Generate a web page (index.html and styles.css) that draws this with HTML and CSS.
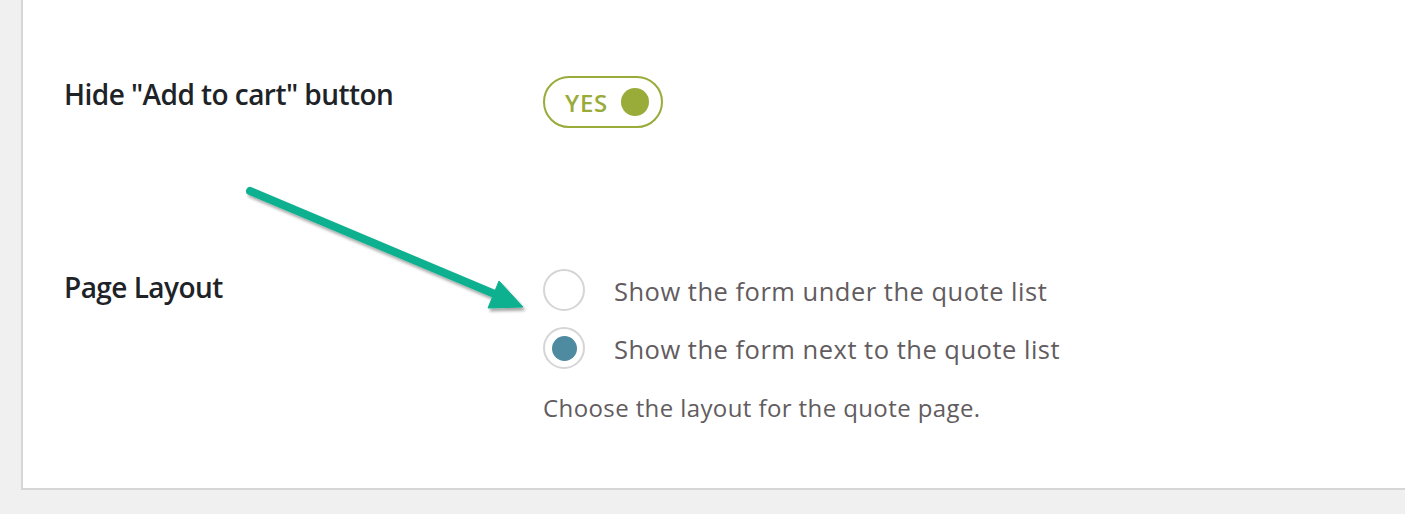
FILE: index.html
```html
<!DOCTYPE html>
<html lang="en">
<head>
<meta charset="utf-8">
<title>Quote settings</title>
<link rel="stylesheet" href="styles.css">
</head>
<body>
<div class="panel">
  <div class="settings">
    <div class="setting">
      <div class="setting-label">Hide "Add to cart" button</div>
      <div class="setting-control">
        <span class="toggle"><span class="toggle-text">YES</span><span class="toggle-dot"></span></span>
      </div>
    </div>
    <div class="setting">
      <div class="setting-label">Page Layout</div>
      <div class="setting-control">
        <ul class="radio-list">
          <li class="radio-item"><span class="radio"></span><span class="radio-text">Show the form under the quote list</span></li>
          <li class="radio-item"><span class="radio radio-checked"></span><span class="radio-text">Show the form next to the quote list</span></li>
        </ul>
        <p class="description">Choose the layout for the quote page.</p>
      </div>
    </div>
  </div>
</div>
<svg class="arrow" width="1405" height="514" viewBox="0 0 1405 514" aria-hidden="true">
  <defs>
    <filter id="shadow" x="-10%" y="-10%" width="130%" height="140%">
      <feDropShadow dx="2" dy="3" stdDeviation="1.8" flood-color="#000" flood-opacity="0.35"/>
    </filter>
  </defs>
  <g filter="url(#shadow)" fill="#10b08f" stroke="#10b08f">
    <line x1="250" y1="191" x2="497" y2="295" stroke-width="8" stroke-linecap="round"/>
    <polygon points="523,307 499,281 488,308" stroke-width="1" stroke-linejoin="round"/>
  </g>
</svg>
</body>
</html>
```

FILE: styles.css
```css
html, body {
  margin: 0;
  padding: 0;
}

body {
  background: #f0f0f0;
  width: 1405px;
  height: 514px;
  overflow: hidden;
  position: relative;
  font-family: "Open Sans", "Noto Sans", sans-serif;
}

.panel {
  box-sizing: border-box;
  margin-left: 21px;
  height: 490px;
  background: #ffffff;
  border-left: 2px solid #d6d6d6;
  border-bottom: 2px solid #d6d6d6;
  padding: 76px 0 0 41px;
}

.settings {
  display: flex;
  flex-direction: column;
  gap: 141px;
}

.setting {
  display: flex;
  align-items: flex-start;
}

.setting-label {
  width: 479px;
  flex: none;
  padding-top: 1px;
  font-size: 28px;
  line-height: 34px;
  font-weight: 600;
  color: #1d2327;
  letter-spacing: -0.55px;
}

.setting-control {
  display: flex;
  flex-direction: column;
}

.toggle {
  box-sizing: border-box;
  width: 120px;
  height: 52px;
  border: 2px solid #99ab38;
  border-radius: 26px;
  display: flex;
  align-items: center;
  justify-content: space-between;
  padding: 0 12px 0 20px;
}

.toggle-text {
  font-size: 24px;
  font-weight: 600;
  color: #99ab38;
  letter-spacing: 0.7px;
}

.toggle-dot {
  width: 28px;
  height: 28px;
  border-radius: 50%;
  background: #99ab38;
}

.radio-list {
  list-style: none;
  margin: 0;
  padding: 0;
  display: flex;
  flex-direction: column;
  gap: 16px;
}

.radio-item {
  display: flex;
  align-items: center;
  gap: 29px;
  height: 42px;
}

.radio {
  box-sizing: border-box;
  width: 42px;
  height: 42px;
  border: 2px solid #d5d5d5;
  border-radius: 50%;
  background: #fff;
  display: flex;
  align-items: center;
  justify-content: center;
  flex: none;
}

.radio-checked::after {
  content: "";
  width: 25px;
  height: 25px;
  border-radius: 50%;
  background: #4e8aa0;
}

.radio-text {
  padding-top: 2px;
  font-size: 25.5px;
  line-height: 42px;
  color: #625c60;
  letter-spacing: 0.5px;
}

.description {
  margin: 23px 0 0;
  font-size: 24px;
  line-height: 32px;
  color: #625c60;
  letter-spacing: 0.4px;
}

.arrow {
  position: absolute;
  left: 0;
  top: 0;
  pointer-events: none;
}
```
